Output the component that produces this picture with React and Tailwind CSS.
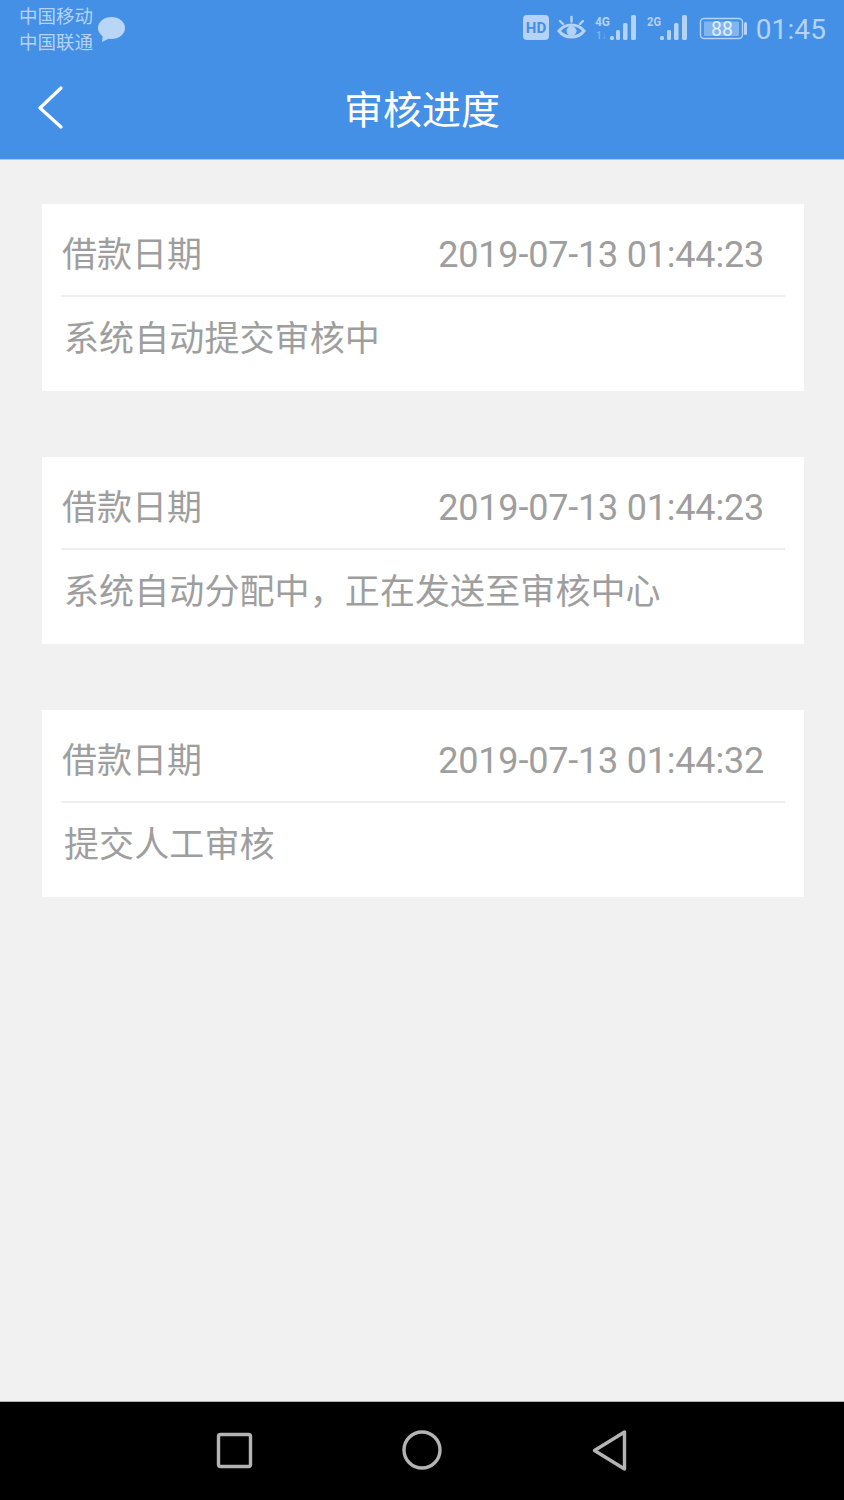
const cjk = "font-['Roboto','Noto_Sans_CJK_SC',sans-serif]";

const records = [
  { time: "2019-07-13 01:44:23", note: "系统自动提交审核中" },
  { time: "2019-07-13 01:44:23", note: "系统自动分配中，正在发送至审核中心" },
  { time: "2019-07-13 01:44:32", note: "提交人工审核" },
];

const StatusIcons = () => (
  <div className="flex items-center text-[#b4d3f6]">
    <svg width="232" height="34" viewBox="0 -2 232 34" fill="currentColor">
      {/* HD */}
      <rect x="2" y="0" width="26" height="25" rx="4" />
      <text x="15" y="18" textAnchor="middle" fontSize="15" fontWeight="700" fill="#4390e6" fontFamily="Roboto">HD</text>
      {/* eye */}
      <g fill="none" stroke="currentColor" strokeLinecap="round">
        <path d="M38 16c6-8 19-8 25 0c-6 8-19 8-25 0z" strokeWidth="3" />
        <circle cx="50.500" cy="16" r="4.500" fill="currentColor" strokeWidth="1" />
        <path d="M39 6l3 3M50.500 2v4.500M62 6l-3 3" strokeWidth="2.400" />
      </g>
      {/* 4G signal */}
      <text x="74" y="10.500" fontSize="13.500" fontWeight="700" fontFamily="Roboto" textLength="15" lengthAdjust="spacingAndGlyphs">4G</text>
      <text x="75" y="24" fontSize="10" fontWeight="700" opacity="0.5" fontFamily="Roboto">1↓</text>
      <rect x="89" y="21" width="4" height="4" rx="1.500" />
      <rect x="95" y="15" width="4" height="10" rx="1.500" />
      <rect x="102" y="8" width="4.500" height="17" rx="1.500" />
      <rect x="110" y="0" width="5" height="25" rx="1.500" />
      {/* 2G signal */}
      <text x="126" y="10.500" fontSize="13.500" fontWeight="700" fontFamily="Roboto" textLength="14" lengthAdjust="spacingAndGlyphs">2G</text>
      <rect x="139" y="21" width="4" height="4" rx="1.500" />
      <rect x="146" y="15" width="4" height="10" rx="1.500" />
      <rect x="153" y="8" width="4.500" height="17" rx="1.500" />
      <rect x="161" y="0" width="5" height="25" rx="1.500" />
      {/* battery */}
      <rect x="179.500" y="3.500" width="42" height="20" rx="3.500" fill="none" stroke="currentColor" strokeWidth="1.400" />
      <rect x="183" y="6.500" width="35" height="14.500" rx="1" opacity="0.55" />
      <text x="201" y="21" textAnchor="middle" fontSize="19.500" fontFamily="Roboto" fill="#e3eefb">88</text>
      <rect x="223" y="7" width="3" height="13" rx="1.500" />
    </svg>
    <span className="ml-[3px] font-['Roboto',sans-serif] text-[28px] leading-none tracking-[0.1px]">01:45</span>
  </div>
);

const RecordCard = ({ time, note }) => (
  <div className="bg-white h-[187px] flex flex-col">
    <div className="h-[93px] mx-[19px] pl-[1px] pr-[21px] pt-[11px] flex items-center justify-between border-b-2 border-[#efefef]">
      <span className={`${cjk} relative top-[0.5px] text-[35px] leading-none text-[#9e9e9e]`}>借款日期</span>
      <span className={`${cjk} text-[36px] leading-none text-[#9e9e9e] tracking-[-0.2px]`}>{time}</span>
    </div>
    <div className={`${cjk} pl-[22px] pt-[21px] text-[35px] leading-[44px] tracking-[0.1px] text-[#9e9e9e]`}>{note}</div>
  </div>
);

export default function App() {
  return (
    <div className="w-[844px] h-[1500px] flex flex-col bg-[#f1f1f1]">
      <header className="h-[160px] shrink-0 bg-[#4390e6] border-b border-[#a9cbf2]">
        <div className="h-[60px] pl-[19px] pr-[18px] flex items-center justify-between">
          <div className="flex items-center">
            <div className={`${cjk} text-[18.5px] leading-[26px] text-[#b4d3f6]`}>
              <div>中国移动</div>
              <div>中国联通</div>
            </div>
            <svg className="ml-[4px]" width="28" height="26" viewBox="0 0 28 26" fill="#b9d6f7">
              <ellipse cx="14.5" cy="11" rx="13.5" ry="11" />
              <path d="M6 17l-1 8l10-5z" />
            </svg>
          </div>
          <StatusIcons />
        </div>
        <div className="h-[99px] relative flex items-center justify-center pt-[4px]">
          <svg className="absolute left-[36px] top-[25px]" width="30" height="44" viewBox="0 0 30 44" fill="none" stroke="#ffffff" strokeWidth="3.2" strokeLinecap="round" strokeLinejoin="round">
            <path d="M25 3L4 23l21 19" />
          </svg>
          <h1 className={`${cjk} text-[39px] leading-none font-normal text-white`}>审核进度</h1>
        </div>
      </header>

      <main className="flex-1 px-[42px] w-[846px] pt-[44px] flex flex-col gap-[66px]">
        {records.map((r, i) => (
          <RecordCard key={i} time={r.time} note={r.note} />
        ))}
      </main>

      <nav className="h-[99px] shrink-0 bg-black border-t border-[#b0b0b0] relative">
        <svg className="absolute left-0 top-0" width="844" height="98" viewBox="0 0 844 98" fill="none" stroke="#b4b4b4" strokeWidth="3.4" strokeLinejoin="round">
          <rect x="218.5" y="32.5" width="32" height="32" rx="2" />
          <circle cx="422" cy="48" r="18" />
          <path d="M624.500 30v37l-30-18.500z" />
        </svg>
      </nav>
    </div>
  );
}
